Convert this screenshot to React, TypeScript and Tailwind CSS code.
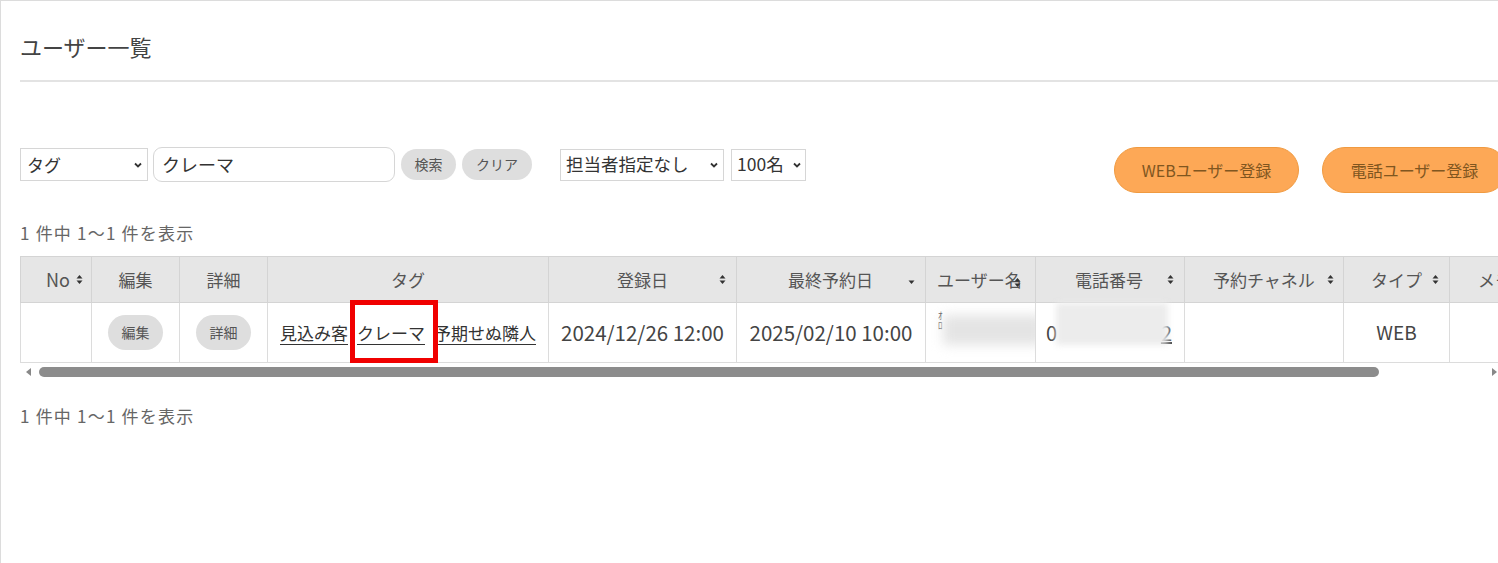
import React from "react";

const SortIcon = ({ down = false }: { down?: boolean }) => (
  <svg width="7" height="11" viewBox="0 0 7 11" className="inline-block shrink-0">
    {!down && <path d="M0.5 4.5 L3.5 1 L6.5 4.5 Z" fill="#333" />}
    <path d="M0.5 6.5 L3.5 10 L6.5 6.5 Z" fill="#333" />
  </svg>
);

const Chevron = () => (
  <svg width="10" height="10" viewBox="0 0 10 10" className="shrink-0">
    <path d="M2 3.5 L5 6.5 L8 3.5" fill="none" stroke="#333" strokeWidth="1.8" />
  </svg>
);

const cols = [71, 88, 88, 281, 188, 189, 110, 149, 159, 106, 120];

const Summary = () => (
  <p className="text-[17px] text-[#666] leading-none tracking-[1.2px]">1 件中 1〜1 件を表示</p>
);

export default function App() {
  return (
    <div
      className="w-[1498px] h-[563px] overflow-hidden bg-white border-l border-t border-[#dcdcdc]"
      style={{ fontFamily: '"Noto Sans CJK JP", "Noto Sans", sans-serif' }}
    >
      <div className="w-[1520px] pl-[19px]">
        <h1 className="pt-[31px] text-[22px] leading-[28px] text-[#444]">ユーザー一覧</h1>
        <div className="mt-[20px] h-[2px] bg-[#e3e3e3]" />

        {/* controls */}
        <div className="mt-[65px] flex items-start w-[1487px]">
          <div className="flex items-center h-[35px]">
            <div className="w-[128px] h-[33px] border border-[#d6d6d6] flex items-center justify-between pl-[6px] pr-[4px] text-[17px] text-[#333]">
              <span>タグ</span>
              <Chevron />
            </div>
            <div className="ml-[5px] w-[242px] h-[35px] border border-[#d6d6d6] rounded-[9px] flex items-center pl-[8px] text-[18px] text-[#333]">
              クレーマ
            </div>
            <button className="ml-[6px] w-[55px] h-[31px] rounded-full bg-[#dedede] text-[14px] text-[#555]">検索</button>
            <button className="ml-[6px] w-[70px] h-[31px] rounded-full bg-[#dedede] text-[14px] text-[#555]">クリア</button>
            <div className="ml-[28px] w-[164px] h-[32px] border border-[#d6d6d6] flex items-center justify-between pl-[5px] pr-[4px] text-[17.5px] text-[#333]">
              <span>担当者指定なし</span>
              <Chevron />
            </div>
            <div className="ml-[7px] w-[75px] h-[32px] border border-[#d6d6d6] flex items-center justify-between pl-[5px] pr-[3px] text-[17.5px] text-[#333]">
              <span>100名</span>
              <Chevron />
            </div>
          </div>
          <div className="ml-auto flex gap-[23px]">
            <button className="w-[185px] h-[46px] rounded-full bg-[#fda856] border border-[#f09a40] text-[16px] text-[#80561f]">
              WEBユーザー登録
            </button>
            <button className="w-[185px] h-[46px] rounded-full bg-[#fda856] border border-[#f09a40] text-[16px] text-[#80561f]">
              電話ユーザー登録
            </button>
          </div>
        </div>

        <div className="mt-[31px]">
          <Summary />
        </div>

        {/* table */}
        <div className="mt-[15px]">
          <table className="table-fixed border-collapse text-[#444]" style={{ width: cols.reduce((a, b) => a + b, 0) }}>
            <colgroup>
              {cols.map((w, i) => (
                <col key={i} style={{ width: w }} />
              ))}
            </colgroup>
            <thead>
              <tr className="h-[46px] bg-[#e6e6e6] text-[17px] text-[#555]">
                <th className="border border-[#d4d4d4] font-normal pr-[8px]">
                  <div className="flex items-center justify-end gap-[6px] text-[18px]">No<SortIcon /></div>
                </th>
                <th className="border border-[#d4d4d4] font-normal">編集</th>
                <th className="border border-[#d4d4d4] font-normal">詳細</th>
                <th className="border border-[#d4d4d4] font-normal">タグ</th>
                <th className="border border-[#d4d4d4] font-normal">
                  <div className="flex items-center justify-between pl-[68px] pr-[10px]">登録日<SortIcon /></div>
                </th>
                <th className="border border-[#d4d4d4] font-normal">
                  <div className="flex items-center justify-between pl-[51px] pr-[10px]">最終予約日<SortIcon down /></div>
                </th>
                <th className="border border-[#d4d4d4] font-normal">
                  <div className="flex items-center pl-[11px]">ユーザー名<span className="-ml-[8px]"><SortIcon /></span></div>
                </th>
                <th className="border border-[#d4d4d4] font-normal">
                  <div className="flex items-center justify-between pl-[39px] pr-[10px]">電話番号<SortIcon /></div>
                </th>
                <th className="border border-[#d4d4d4] font-normal">
                  <div className="flex items-center justify-between pl-[28px] pr-[9px]">予約チャネル<SortIcon /></div>
                </th>
                <th className="border border-[#d4d4d4] font-normal">
                  <div className="flex items-center justify-between pl-[27px] pr-[10px]">タイプ<SortIcon /></div>
                </th>
                <th className="border border-[#d4d4d4] font-normal text-left pl-[28px]">メモ</th>
              </tr>
            </thead>
            <tbody>
              <tr className="h-[60px] text-[17px]">
                <td className="border border-[#dcdcdc]" />
                <td className="border border-[#dcdcdc] text-center">
                  <button className="w-[55px] h-[35px] rounded-full bg-[#dedede] text-[14px] text-[#555]">編集</button>
                </td>
                <td className="border border-[#dcdcdc] text-center">
                  <button className="w-[55px] h-[35px] rounded-full bg-[#dedede] text-[14px] text-[#555]">詳細</button>
                </td>
                <td className="border border-[#dcdcdc] relative">
                  <div className="flex justify-center gap-[9px] text-[#333]">
                    <span className="underline underline-offset-4">見込み客</span>
                    <span className="underline underline-offset-4">クレーマ</span>
                    <span className="underline underline-offset-4">予期せぬ隣人</span>
                  </div>
                  <div className="absolute left-[82px] top-[-3px] w-[88px] h-[63px] border-[5px] border-[#f00000]" />
                </td>
                <td className="border border-[#dcdcdc] text-center text-[20.5px]">2024/12/26 12:00</td>
                <td className="border border-[#dcdcdc] text-center text-[20.5px]">2025/02/10 10:00</td>
                <td className="border border-[#dcdcdc] relative overflow-hidden">
                  <span className="absolute left-[12px] top-[8px] text-[9px] leading-[10px] text-[#555]">ｵ<br />ﾛ</span>
                  <div className="absolute left-[17px] top-[12px] w-[100px] h-[30px] bg-[#e4e4e4] blur-[6px]" />
                </td>
                <td className="border border-[#dcdcdc] relative">
                  <div className="flex items-center pl-[10px] text-[20px]">
                    <span>0</span>
                    <span className="ml-auto mr-[12px] underline">2</span>
                  </div>
                  <div className="absolute left-[20px] top-[0px] w-[112px] h-[42px] bg-[#ececec] blur-[3px]" />
                </td>
                <td className="border border-[#dcdcdc]" />
                <td className="border border-[#dcdcdc] text-center text-[19px]">WEB</td>
                <td className="border border-[#dcdcdc]" />
              </tr>
            </tbody>
          </table>

          {/* scrollbar */}
          <div className="mt-[2px] h-[14px] w-[1479px] flex items-center">
            <svg width="10" height="10" viewBox="0 0 10 10" className="ml-[4px]">
              <path d="M7 1 L2 5 L7 9 Z" fill="#888" />
            </svg>
            <div className="ml-[5px] w-[1340px] h-[10px] rounded-full bg-[#8c8c8c]" />
            <svg width="10" height="10" viewBox="0 0 10 10" className="ml-auto">
              <path d="M3 1 L8 5 L3 9 Z" fill="#888" />
            </svg>
          </div>
        </div>

        <div className="mt-[28px]">
          <Summary />
        </div>
      </div>
    </div>
  );
}
